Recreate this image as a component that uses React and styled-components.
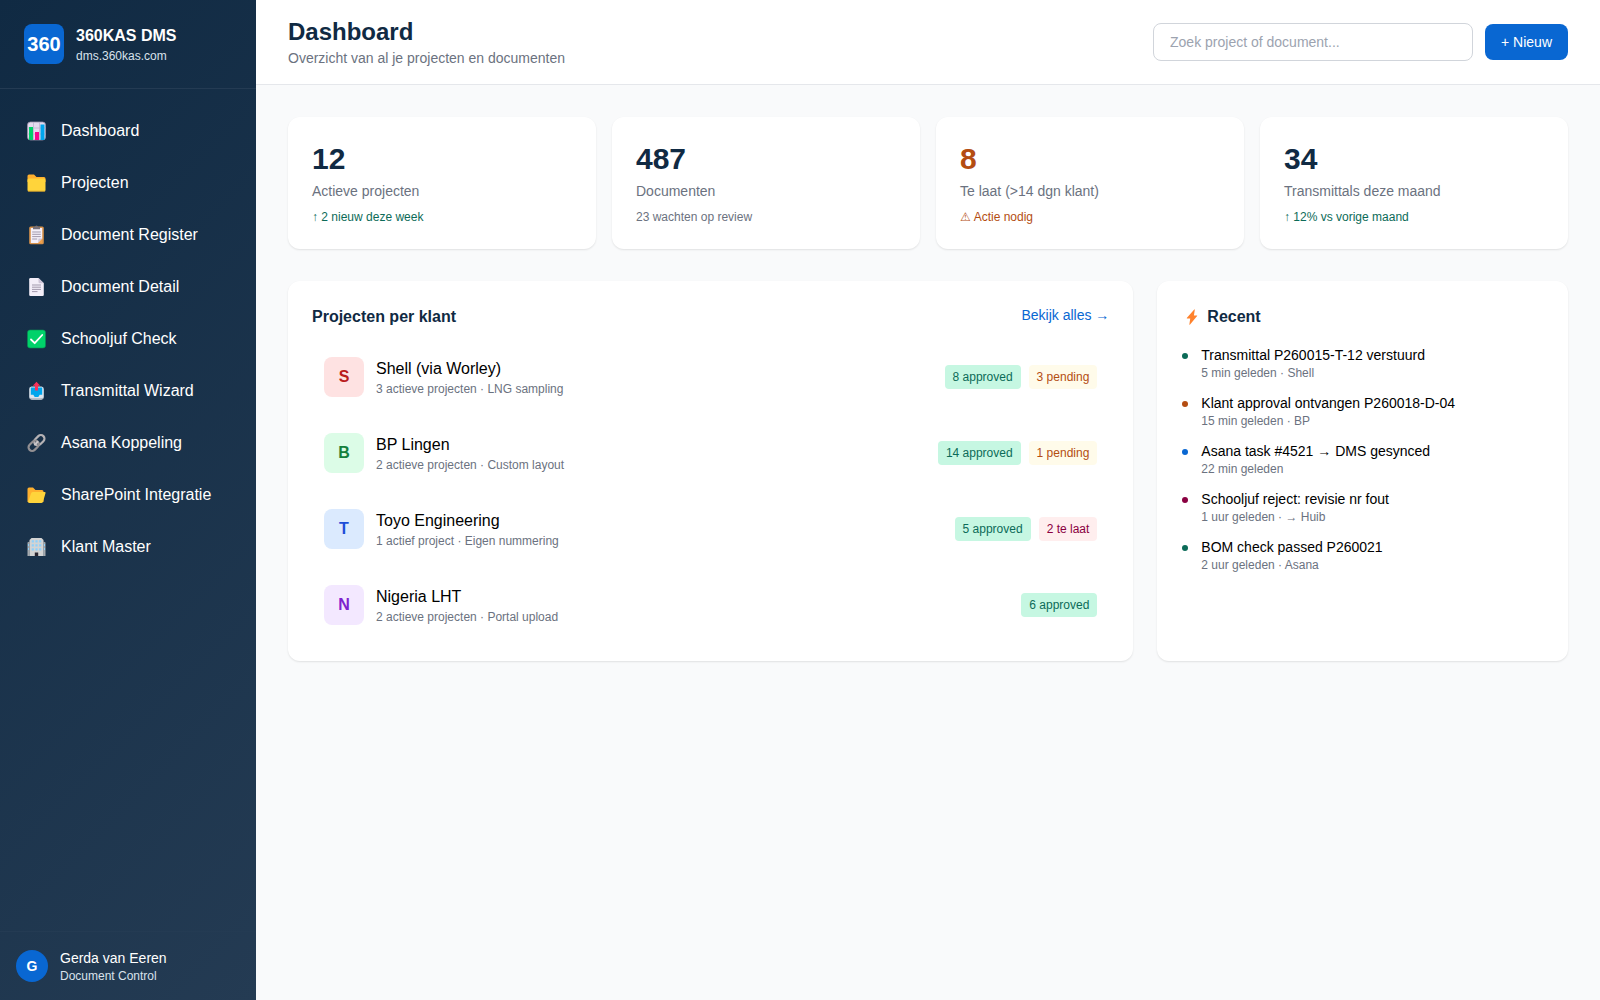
import React from "react"
import styled, { createGlobalStyle } from "styled-components"

const GlobalStyle = createGlobalStyle`
  *,
  *::before,
  *::after {
    box-sizing: border-box;
  }

  body {
    margin: 0;
    background-color: #f9fafb;
    color: #000;
    font-family: "Liberation Sans", Arial, sans-serif;
    font-size: 16px;
    line-height: 24px;
  }

  h1, h2, p, ul {
    margin: 0;
    padding: 0;
  }

  ul {
    list-style: none;
  }

  a {
    color: inherit;
    text-decoration: none;
  }

  button, input {
    font-family: inherit;
  }
`

const Layout = styled.div`
  display: flex;
  min-height: 100vh;
`

const Sidebar = styled.aside`
  display: flex;
  flex-direction: column;
  flex: 0 0 256px;
  color: white;
  background-image: linear-gradient(135deg, #102a43, #243b53);
`

const Brand = styled.div`
  display: flex;
  align-items: center;
  gap: 12px;
  padding: 24px;
  border-bottom: 1px solid #243b53;
`

const Logo = styled.div`
  display: flex;
  align-items: center;
  justify-content: center;
  width: 40px;
  height: 40px;
  border-radius: 8px;
  background-color: #0967d2;
  font-size: 20px;
  font-weight: 700;
`

const BrandName = styled.div`
  font-weight: 700;
`

const SidebarNote = styled.div`
  font-size: 12px;
  line-height: 16px;
  color: #d9e2ec;
`

const Nav = styled.nav`
  flex: 1;
  padding: 16px 0;
`

const NavLink = styled.a`
  display: flex;
  align-items: center;
  gap: 12px;
  height: 52px;
  padding: 0 24px;

  &:hover {
    background-color: rgba(255, 255, 255, 0.1);
  }

  svg {
    width: 25px;
    height: 20px;
  }
`

const UserBar = styled.div`
  display: flex;
  align-items: center;
  gap: 12px;
  padding: 16px;
  border-top: 1px solid #243b53;
`

const UserAvatar = styled.div`
  display: flex;
  align-items: center;
  justify-content: center;
  width: 32px;
  height: 32px;
  border-radius: 50%;
  background-color: #0967d2;
  font-size: 14px;
  font-weight: 700;
`

const UserName = styled.div`
  font-size: 14px;
  line-height: 20px;
`

const Main = styled.main`
  flex: 1;
  min-width: 0;
`

const Header = styled.header`
  display: flex;
  align-items: center;
  justify-content: space-between;
  padding: 16px 32px;
  background-color: white;
  border-bottom: 1px solid #e5e7eb;
`

const PageTitle = styled.h1`
  font-size: 24px;
  line-height: 32px;
  font-weight: 700;
  color: #102a43;
`

const Subtitle = styled.p`
  font-size: 14px;
  line-height: 20px;
  color: #6b7280;
`

const Actions = styled.div`
  display: flex;
  align-items: center;
  gap: 12px;
`

const Search = styled.input`
  width: 320px;
  height: 38px;
  padding: 8px 16px;
  border: 1px solid #d1d5db;
  border-radius: 8px;
  background-color: white;
  font-size: 14px;
  line-height: 20px;

  &::placeholder {
    color: #9ca3af;
  }
`

const NewButton = styled.button`
  padding: 8px 16px;
  border: 0;
  border-radius: 8px;
  background-color: #0967d2;
  color: white;
  font-size: 14px;
  line-height: 20px;
  cursor: pointer;
`

const Content = styled.div`
  display: flex;
  flex-direction: column;
  gap: 32px;
  padding: 32px;
`

const Stats = styled.div`
  display: grid;
  grid-template-columns: repeat(4, 1fr);
  gap: 16px;
`

const Card = styled.section`
  padding: 24px;
  border-radius: 12px;
  background-color: white;
  box-shadow: 0 1px 2px rgba(0, 0, 0, 0.1);
`

const StatValue = styled.div`
  font-size: 30px;
  line-height: 36px;
  font-weight: 700;
  color: ${props => props.$color || "#102a43"};
`

const StatLabel = styled.div`
  margin-top: 4px;
  font-size: 14px;
  line-height: 20px;
  color: #6b7280;
`

const StatTrend = styled.div`
  margin-top: 8px;
  font-size: 12px;
  line-height: 16px;
  color: ${props => props.$color || "#6b7280"};
`

const Panels = styled.div`
  display: grid;
  grid-template-columns: repeat(3, 1fr);
  gap: 24px;
`

const ProjectsCard = styled(Card)`
  grid-column: span 2;
`

const CardHeader = styled.div`
  display: flex;
  align-items: flex-start;
  justify-content: space-between;
  margin-bottom: 16px;
`

const CardTitle = styled.h2`
  display: flex;
  align-items: center;
  gap: 4px;
  font-size: 16px;
  line-height: 24px;
  font-weight: 700;
  color: #102a43;

  svg {
    width: 22px;
    height: 16px;
  }
`

const MoreLink = styled.a`
  font-size: 14px;
  line-height: 20px;
  color: #0967d2;
`

const ProjectList = styled.ul`
  display: flex;
  flex-direction: column;
  gap: 12px;
`

const ProjectRow = styled.li`
  display: flex;
  align-items: center;
  gap: 12px;
  padding: 12px;
  border-radius: 8px;

  &:hover {
    background-color: #f9fafb;
  }
`

const Initial = styled.div`
  display: flex;
  align-items: center;
  justify-content: center;
  width: 40px;
  height: 40px;
  border-radius: 8px;
  font-weight: 700;
  color: ${props => props.$color};
  background-color: ${props => props.$background};
`

const ProjectText = styled.div`
  flex: 1;
`

const Meta = styled.div`
  font-size: 12px;
  line-height: 16px;
  color: #6b7280;
`

const Badges = styled.div`
  display: flex;
  gap: 8px;
`

const badgeColors = {
  approved: { text: "#0c6b58", background: "#c6f7e2" },
  pending: { text: "#b44d12", background: "#fffbea" },
  late: { text: "#8a0041", background: "#ffeeee" },
}

const Badge = styled.span`
  padding: 4px 8px;
  border-radius: 4px;
  font-size: 12px;
  line-height: 16px;
  color: ${props => badgeColors[props.$kind].text};
  background-color: ${props => badgeColors[props.$kind].background};
`

const Feed = styled.ul`
  display: flex;
  flex-direction: column;
  gap: 12px;
`

const FeedItem = styled.li`
  display: flex;
  gap: 12px;
`

const Dot = styled.span`
  width: 6px;
  height: 6px;
  margin: 8px 1px;
  border-radius: 50%;
  background-color: ${props => props.$color};
`

const FeedTitle = styled.div`
  font-size: 14px;
  line-height: 20px;
`

const icons = {
  chart: (
    <>
      <rect x="1" y="1" width="18" height="18" rx="3" fill="#e4dbef" stroke="#9b91a8" strokeWidth="0.8" />
      <path d="M1 7h18M1 13h18M7 1v18M13 1v18" stroke="#bfb3cf" strokeWidth="0.8" />
      <path d="M2.5 6h4v13h-4z" fill="#00d26a" />
      <path d="M8.5 11h4v8h-4z" fill="#f70a8d" />
      <path d="M14 3.5h4V19h-4z" fill="#00a6ed" />
    </>
  ),
  folder: (
    <>
      <path d="M1 3q0-1.500 1.500-1.500h5L10 4h7.500Q19 4 19 5.500V9H1z" fill="#ffb02e" />
      <rect x="1" y="5.5" width="18" height="13" rx="1.5" fill="#ffd43b" />
      <path d="M1.500 18.300h17" stroke="#b98a2c" strokeWidth="0.8" />
    </>
  ),
  clipboard: (
    <>
      <rect x="2.7" y="1.5" width="14.6" height="17.800" rx="1.5" fill="#d9934b" />
      <path d="M4.300 3h11.400v11L12 18H4.300z" fill="#f5f0fa" />
      <path d="M15.700 13.500V18h-4.200z" fill="#f0a04b" />
      <path d="M11.500 17.500l.5-4h3.700z" fill="#cdc4d6" />
      <path d="M6.500 2h2a1.500 1.500 0 0 1 3 0h2v2.200h-7z" fill="#777179" />
      <path d="M5.700 7h8.600M5.700 9.300h8.600M5.700 11.600h8.600M5.700 14h5" stroke="#998ea4" strokeWidth="0.9" />
    </>
  ),
  page: (
    <>
      <path d="M2.700 2.200q0-1.200 1.200-1.200H12l5.300 5.200v11.600q0 1.200-1.200 1.200H3.900q-1.200 0-1.200-1.200z" fill="#f3eef8" />
      <path d="M12 1l5.300 5.200h-4q-1.300 0-1.300-1.300z" fill="#cdc4d6" />
      <path d="M5.500 8h9M5.500 10.200h9M5.500 12.400h9M5.500 14.600h5.500" stroke="#998ea4" strokeWidth="0.9" />
    </>
  ),
  check: (
    <>
      <rect x="1" y="1" width="18" height="18" rx="2.5" fill="#00d26a" stroke="#078d50" strokeWidth="0.6" />
      <path d="M4.500 10.500l3.700 3.700L15.700 6" fill="none" stroke="#fff" strokeWidth="1.8" strokeLinecap="round" strokeLinejoin="round" />
    </>
  ),
  outbox: (
    <>
      <path d="M5 5.500h10q2.300 0 2.300 2.500v7.500q0 3-3 3H5.700q-3 0-3-3V8q0-2.500 2.300-2.500z" fill="#dce5ee" />
      <path d="M4.300 6.500h11.400v7.300h-2.500l-1.400 2.200H8.200l-1.400-2.200H4.300z" fill="#00a6ed" />
      <path d="M2.900 16.300q.5 2.700 3.100 2.700h8q2.600 0 3.100-2.700-1 1-2.600 1h-9q-1.600 0-2.600-1z" fill="#aab3bd" />
      <path d="M10 .8l3.700 4h-2.200v4.700h-3V4.800H6.300z" fill="#f8315b" />
    </>
  ),
  link: (
    <g fill="none" strokeWidth="2.2">
      <rect x="-5.8" y="-3.6" width="11.6" height="7.2" rx="3.6" transform="translate(12.8 7.2) rotate(-45)" stroke="#b5b2b5" />
      <rect x="-5.8" y="-3.6" width="11.6" height="7.2" rx="3.6" transform="translate(7.2 12.8) rotate(-45)" stroke="#928f92" />
      <path d="M8.500 11.500l2.500-2.500" stroke="#c8c5c8" strokeLinecap="round" />
    </g>
  ),
  folderOpen: (
    <>
      <path d="M1 4q0-1.500 1.500-1.500h4L9 5h6.500Q17 5 17 6.500V17H1z" fill="#ffb02e" />
      <path d="M6.500 7h11.700q1.200 0 .8 1.200l-2.500 8.500q-.4 1.300-1.700 1.300H3q-1.800 0-1.300-1.500L4.600 8.300Q5 7 6.500 7z" fill="#ffd43b" />
    </>
  ),
  building: (
    <>
      <path d="M1 5.500l2-1V19H1zM17 4.500l2 1V19h-2z" fill="#a5a9ae" />
      <path d="M3 3l2-2h10l2 2v16H3z" fill="#d3d3d3" />
      <path d="M5.200 3.200h2.200v2.200H5.200zM8.900 3.200h2.200v2.200H8.900zM12.600 3.200h2.200v2.200h-2.200zM5.200 7.200h2.200v2.200H5.200zM8.900 7.200h2.200v2.200H8.900zM12.600 7.200h2.200v2.200h-2.200zM5.200 11.200h2.200v2.200H5.200zM8.900 11.200h2.200v2.200H8.900zM12.600 11.200h2.200v2.200h-2.200z" fill="#8ed0fa" />
      <path d="M1.500 7h1v2h-1zM1.500 11h1v2h-1zM17.500 7h1v2h-1zM17.500 11h1v2h-1z" fill="#8ed0fa" />
      <path d="M8.300 15.500h3.400V19H8.300z" fill="#2b2630" />
    </>
  ),
  bolt: <path d="M12.800.5L3.700 11q-.6 1 .5 1h3.600l-1.100 7.500q.1.600.6.100L16.400 8.800q.6-.8-.4-.8h-3.600L13.500.8q0-.7-.7-.3z" fill="#ff822d" />,
}

const Icon = ({ name }) => (
  <svg viewBox="0 0 20 20" aria-hidden="true">
    {icons[name]}
  </svg>
)

const navItems = [
  { icon: "chart", label: "Dashboard" },
  { icon: "folder", label: "Projecten" },
  { icon: "clipboard", label: "Document Register" },
  { icon: "page", label: "Document Detail" },
  { icon: "check", label: "Schooljuf Check" },
  { icon: "outbox", label: "Transmittal Wizard" },
  { icon: "link", label: "Asana Koppeling" },
  { icon: "folderOpen", label: "SharePoint Integratie" },
  { icon: "building", label: "Klant Master" },
]

const stats = [
  { value: "12", label: "Actieve projecten", trend: "↑ 2 nieuw deze week", trendColor: "#0c6b58" },
  { value: "487", label: "Documenten", trend: "23 wachten op review" },
  { value: "8", label: "Te laat (>14 dgn klant)", trend: "⚠ Actie nodig", color: "#b44d12", trendColor: "#b44d12" },
  { value: "34", label: "Transmittals deze maand", trend: "↑ 12% vs vorige maand", trendColor: "#0c6b58" },
]

const projects = [
  {
    name: "Shell (via Worley)",
    meta: "3 actieve projecten · LNG sampling",
    color: "#b91c1c",
    background: "#fee2e2",
    badges: [["approved", "8 approved"], ["pending", "3 pending"]],
  },
  {
    name: "BP Lingen",
    meta: "2 actieve projecten · Custom layout",
    color: "#15803d",
    background: "#dcfce7",
    badges: [["approved", "14 approved"], ["pending", "1 pending"]],
  },
  {
    name: "Toyo Engineering",
    meta: "1 actief project · Eigen nummering",
    color: "#1d4ed8",
    background: "#dbeafe",
    badges: [["approved", "5 approved"], ["late", "2 te laat"]],
  },
  {
    name: "Nigeria LHT",
    meta: "2 actieve projecten · Portal upload",
    color: "#7e22ce",
    background: "#f3e8ff",
    badges: [["approved", "6 approved"]],
  },
]

const recent = [
  { title: "Transmittal P260015-T-12 verstuurd", meta: "5 min geleden · Shell", color: "#0c6b58" },
  { title: "Klant approval ontvangen P260018-D-04", meta: "15 min geleden · BP", color: "#b44d12" },
  { title: "Asana task #4521 → DMS gesynced", meta: "22 min geleden", color: "#0967d2" },
  { title: "Schooljuf reject: revisie nr fout", meta: "1 uur geleden · → Huib", color: "#8a0041" },
  { title: "BOM check passed P260021", meta: "2 uur geleden · Asana", color: "#0c6b58" },
]

export default function App() {
  return (
    <Layout>
      <GlobalStyle />
      <Sidebar>
        <Brand>
          <Logo>360</Logo>
          <div>
            <BrandName>360KAS DMS</BrandName>
            <SidebarNote>dms.360kas.com</SidebarNote>
          </div>
        </Brand>
        <Nav>
          {navItems.map(item => (
            <NavLink href="#" key={item.label}>
              <Icon name={item.icon} />
              {item.label}
            </NavLink>
          ))}
        </Nav>
        <UserBar>
          <UserAvatar>G</UserAvatar>
          <div>
            <UserName>Gerda van Eeren</UserName>
            <SidebarNote>Document Control</SidebarNote>
          </div>
        </UserBar>
      </Sidebar>

      <Main>
        <Header>
          <div>
            <PageTitle>Dashboard</PageTitle>
            <Subtitle>Overzicht van al je projecten en documenten</Subtitle>
          </div>
          <Actions>
            <Search
              type="text"
              aria-label="Zoek project of document"
              placeholder="Zoek project of document..."
            />
            <NewButton type="button">+ Nieuw</NewButton>
          </Actions>
        </Header>

        <Content>
          <Stats>
            {stats.map(stat => (
              <Card key={stat.label}>
                <StatValue $color={stat.color}>{stat.value}</StatValue>
                <StatLabel>{stat.label}</StatLabel>
                <StatTrend $color={stat.trendColor}>{stat.trend}</StatTrend>
              </Card>
            ))}
          </Stats>

          <Panels>
            <ProjectsCard>
              <CardHeader>
                <CardTitle>Projecten per klant</CardTitle>
                <MoreLink href="#">Bekijk alles →</MoreLink>
              </CardHeader>
              <ProjectList>
                {projects.map(project => (
                  <ProjectRow key={project.name}>
                    <Initial $color={project.color} $background={project.background}>
                      {project.name[0]}
                    </Initial>
                    <ProjectText>
                      <div>{project.name}</div>
                      <Meta>{project.meta}</Meta>
                    </ProjectText>
                    <Badges>
                      {project.badges.map(([kind, text]) => (
                        <Badge $kind={kind} key={kind}>
                          {text}
                        </Badge>
                      ))}
                    </Badges>
                  </ProjectRow>
                ))}
              </ProjectList>
            </ProjectsCard>

            <Card>
              <CardHeader>
                <CardTitle>
                  <Icon name="bolt" />
                  Recent
                </CardTitle>
              </CardHeader>
              <Feed>
                {recent.map(item => (
                  <FeedItem key={item.title}>
                    <Dot $color={item.color} />
                    <div>
                      <FeedTitle>{item.title}</FeedTitle>
                      <Meta>{item.meta}</Meta>
                    </div>
                  </FeedItem>
                ))}
              </Feed>
            </Card>
          </Panels>
        </Content>
      </Main>
    </Layout>
  )
}
